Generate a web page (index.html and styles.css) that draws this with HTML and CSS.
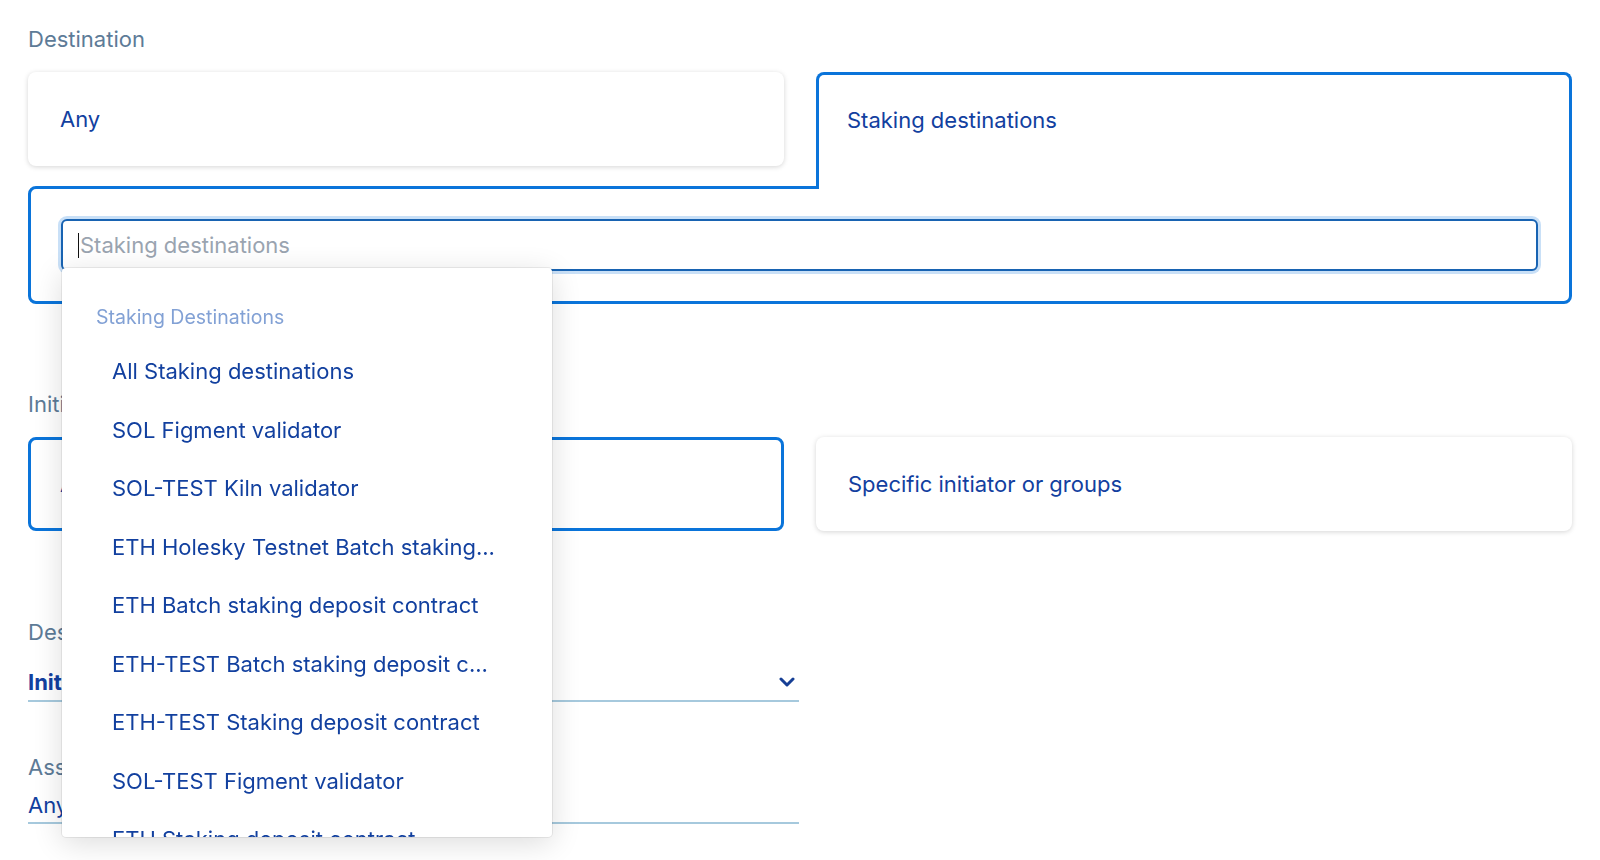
FILE: index.html
```html
<!DOCTYPE html>
<html>
	<head>
		<meta charset="UTF-8">
		<title>Rule</title>
		<link rel="stylesheet" href="styles.css">
	</head>
	<body>
		<div class="page">
			<!-- destination -->
			<div class="field">
				<div class="field-label">Destination</div>
				<div class="choices">
					<div class="choice">Any</div>
					<div class="choice choice-open">Staking destinations</div>
				</div>
				<div class="choice-panel">
					<div class="combo">
						<input class="combo-input" type="text" placeholder="Staking destinations" autofocus>
						<span class="caret"></span>
						<div class="menu">
							<div class="menu-group">Staking Destinations</div>
							<div class="menu-item">All Staking destinations</div>
							<div class="menu-item">SOL Figment validator</div>
							<div class="menu-item">SOL-TEST Kiln validator</div>
							<div class="menu-item">ETH Holesky Testnet Batch staking...</div>
							<div class="menu-item">ETH Batch staking deposit contract</div>
							<div class="menu-item">ETH-TEST Batch staking deposit c...</div>
							<div class="menu-item">ETH-TEST Staking deposit contract</div>
							<div class="menu-item">SOL-TEST Figment validator</div>
							<div class="menu-item">ETH Staking deposit contract</div>
						</div>
					</div>
				</div>
			</div>
			<!-- initiator -->
			<div class="field field-initiator">
				<div class="field-label">Initiator</div>
				<div class="choices">
					<div class="choice choice-on">Any</div>
					<div class="choice">Specific initiator or groups</div>
				</div>
			</div>
			<!-- signer -->
			<div class="field field-signer">
				<div class="field-label">Designated signer</div>
				<div class="select">
					<span class="select-value">Initiator</span>
					<svg class="chevron" width="16" height="10" viewBox="0 0 16 10"><path d="M2 2 L8 8 L14 2" fill="none" stroke="#163f95" stroke-width="3" stroke-linecap="round" stroke-linejoin="round"/></svg>
				</div>
			</div>
			<!-- asset -->
			<div class="field field-asset">
				<div class="field-label">Asset</div>
				<div class="select select-plain">
					<span>Any</span>
				</div>
			</div>
		</div>
	</body>
</html>
```

FILE: styles.css
```css
*{
	margin: 0;
	padding: 0;
}
html,body{
	min-height: 100%;
}
body{
	background: #fff;
	font-family: Inter, "Noto Sans", sans-serif;
	color: #12409f;
}
.page{
	padding: 25px 28px 60px;
}
.field-label{
	font-size: 22px;
	line-height: 28px;
	color: #5d7b97;
	margin-bottom: 19px;
}
.choices{
	display: grid;
	grid-template-columns: 1fr 1fr;
	gap: 32px;
	align-items: start;
}
.choice{
	box-sizing: border-box;
	height: 94px;
	padding: 0 32px;
	display: flex;
	align-items: center;
	background: #fff;
	border-radius: 8px;
	box-shadow: 0 1px 5px rgba(0,0,0,0.17);
	font-size: 22px;
	line-height: 28px;
}
.choice-on{
	border: 3px solid #0a74da;
	padding: 0 29px;
	box-shadow: none;
}
/* the open option runs down into the panel */
.choice-open{
	height: 117px;
	border: 3px solid #0a74da;
	border-bottom: 0;
	border-radius: 8px 8px 0 0;
	box-shadow: none;
	align-items: flex-start;
	padding: 31px 28px 0;
	margin-bottom: -3px;
	position: relative;
	z-index: 1;
}
.choice-panel{
	border: 3px solid #0a74da;
	border-radius: 8px 0 8px 8px;
	padding: 30px 31px 30px 30px;
}
.combo{
	position: relative;
}
.combo-input{
	display: block;
	box-sizing: border-box;
	width: 100%;
	height: 52px;
	border: 2px solid #1863b2;
	border-radius: 6px;
	box-shadow: 0 0 0 3px rgba(10,116,218,0.22);
	outline: none;
	padding: 0 17px;
	font-family: Inter, "Noto Sans", sans-serif;
	font-size: 22px;
	color: #12409f;
	caret-color: transparent;
}
.combo-input::placeholder{
	color: #9aa4b0;
}
.caret{
	position: absolute;
	left: 17px;
	top: 14px;
	width: 1px;
	height: 25px;
	background: #111;
}
.menu{
	position: absolute;
	top: 49px;
	left: 1px;
	width: 490px;
	height: 569px;
	box-sizing: border-box;
	padding-top: 35px;
	overflow: hidden;
	background: #fff;
	border-radius: 4px;
	box-shadow: 0 0 0 1px rgba(0,0,0,0.07), 0 6px 30px rgba(0,0,0,0.14);
	z-index: 2;
}
.menu-group{
	padding-left: 34px;
	font-size: 19.5px;
	line-height: 28px;
	color: #82a1d5;
	margin-bottom: 11px;
}
.menu-item{
	padding-left: 50px;
	height: 58.5px;
	line-height: 58.5px;
	font-size: 22px;
	white-space: nowrap;
}
.field-initiator{
	margin-top: 86px;
}
.field-signer{
	margin-top: 87px;
}
.field-asset{
	margin-top: 51px;
}
.field-asset .field-label{
	margin-bottom: 4px;
}
.select{
	width: 771px;
	display: flex;
	align-items: center;
	justify-content: space-between;
	padding: 3px 4px 4px 0;
	box-sizing: border-box;
	border-bottom: 2px solid #a6c9dd;
	font-size: 22px;
	line-height: 28px;
}
.select-value{
	font-weight: 700;
}
.select-plain{
	padding: 6px 0 3px;
}
```
